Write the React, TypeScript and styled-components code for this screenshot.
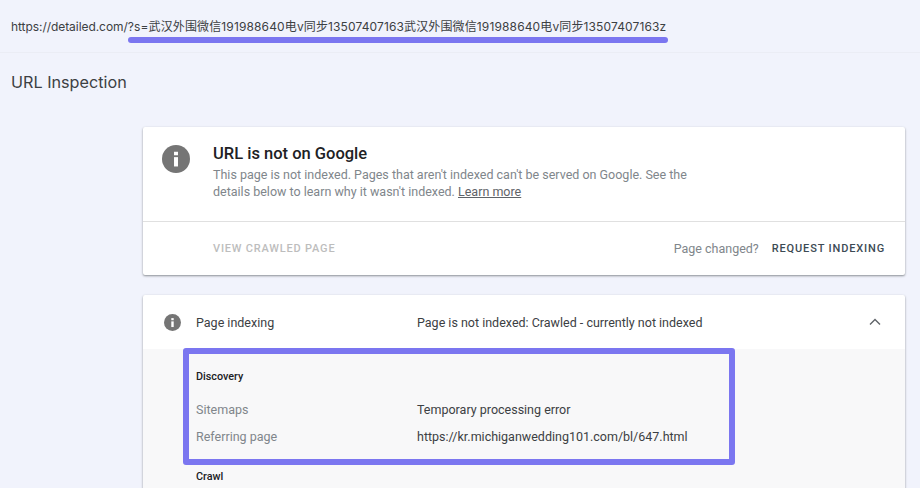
import React from "react";
import styled, { createGlobalStyle } from "styled-components";

const Global = createGlobalStyle`
  html, body { margin: 0; padding: 0; }
  body {
    width: 920px; height: 488px; overflow: hidden;
    background: #f1f3fc;
    font-family: Roboto, "Liberation Sans", "Noto Sans CJK SC", sans-serif;
  }
`;

const Page = styled.div`
  width: 920px; height: 488px; overflow: hidden; display: flex; flex-direction: column;
`;
const UrlBar = styled.div`
  flex: none; height: 53px; box-sizing: border-box; padding: 18px 0 0 11px;
  border-bottom: 1px solid #ebedf5;
  font-family: Inter, "Noto Sans CJK SC", sans-serif; font-size: 12px; letter-spacing: -.06px; line-height: 17px; color: #3c4043; white-space: nowrap;
`;
const Underlined = styled.span`
  position: relative; letter-spacing: .13px;
  &::after {
    content: ""; position: absolute; left: 0; right: -2px; bottom: -9px; height: 6px;
    border-radius: 3px; background: #7b76f0;
  }
`;
const Title = styled.h1`
  flex: none; margin: 18px 0 0 11px; font-family: Inter, sans-serif; font-size: 16.2px; line-height: 22px; font-weight: 400; color: #3c4043;
`;
const Column = styled.main`
  flex: none; margin: 34px 15px 0 143px; display: flex; flex-direction: column; gap: 20px; position: relative;
`;
const Card = styled.section`
  background: #fff; border-radius: 2px;
  box-shadow: 0 1px 2px rgba(60,64,67,.45), 0 1px 3px rgba(60,64,67,.15);
`;
const Summary = styled.div`
  height: 95px; box-sizing: border-box; display: flex; padding: 18px 0 0 19px; gap: 23px;
  border-bottom: 1px solid #e0e0e0;
`;
const SummaryText = styled.div`
  display: flex; flex-direction: column;
`;
const Heading = styled.h2`
  margin: 0 0 4px; font-size: 16.5px; line-height: 18px; font-weight: 500; color: #202124;
`;
const BodyLine = styled.div`
  font-size: 12.5px; line-height: 16.5px; color: #80868b; white-space: nowrap;
`;
const LearnMore = styled.a`
  color: #5f6368; text-decoration: underline;
`;
const Actions = styled.div`
  height: 53px; display: flex; align-items: center; padding: 0 20px 0 70px;
`;
const Disabled = styled.span`
  flex: 1; font-size: 11px; font-weight: 500; letter-spacing: .8px; color: #bdbdbd;
`;
const Changed = styled.span`
  font-size: 12.5px; color: #80868b; margin-right: 13px;
`;
const Request = styled.span`
  font-size: 11px; font-weight: 500; letter-spacing: .85px; color: #3c4a54;
`;
const RowHead = styled.div`
  height: 54px; display: flex; align-items: center; padding: 0 24px 0 21px; font-size: 12.5px; color: #3c4043;
`;
const HeadLabel = styled.span`
  width: 221px; margin-left: 15px;
`;
const HeadValue = styled.span`
  flex: 1;
`;
const Details = styled.div`
  height: 200px; background: #f8f8f9; padding: 0 53px; box-sizing: border-box;
`;
const SectionName = styled.div<{ $top: number }>`
  padding-top: ${p => p.$top}px; font-size: 10.8px; line-height: 14px; font-weight: 500; color: #202124;
`;
const DataRow = styled.div`
  display: flex; height: 27px; align-items: center; font-size: 12.5px;
`;
const DataLabel = styled.span`
  width: 221px; color: #80868b;
`;
const DataValue = styled.span`
  color: #3c4043;
`;
const Rows = styled.div`
  margin-top: 12px;
`;
const Callout = styled.div`
  position: absolute; left: 40px; top: 221px; width: 552px; height: 117px; box-sizing: border-box;
  border: 6px solid #7b76f0; border-radius: 3px;
`;

const InfoIcon = ({ size }: { size: number }) => (
  <svg width={size} height={size} viewBox="0 0 24 24" style={{ flex: "none" }}>
    <circle cx="12" cy="12" r="12" fill="#757575" />
    <rect x="10.3" y="10.4" width="3.4" height="8" fill="#fff" />
    <rect x="10.3" y="5.8" width="3.4" height="3" fill="#fff" />
  </svg>
);
const Chevron = () => (
  <svg width="12" height="8" viewBox="0 0 12 8" style={{ flex: "none" }}>
    <path d="M1 6.5 L6 1.5 L11 6.5" fill="none" stroke="#5f6368" strokeWidth="1.4" />
  </svg>
);

export default function App() {
  return (
    <Page>
      <Global />
      <UrlBar>
        https://detailed.com/
        <Underlined>?s=武汉外围微信191988640电v同步13507407163武汉外围微信191988640电v同步13507407163z</Underlined>
      </UrlBar>
      <Title>URL Inspection</Title>
      <Column>
        <Card>
          <Summary>
            <InfoIcon size={28} />
            <SummaryText>
              <Heading>URL is not on Google</Heading>
              <BodyLine>This page is not indexed. Pages that aren't indexed can't be served on Google. See the</BodyLine>
              <BodyLine>details below to learn why it wasn't indexed. <LearnMore>Learn more</LearnMore></BodyLine>
            </SummaryText>
          </Summary>
          <Actions>
            <Disabled>VIEW CRAWLED PAGE</Disabled>
            <Changed>Page changed?</Changed>
            <Request>REQUEST INDEXING</Request>
          </Actions>
        </Card>
        <Card>
          <RowHead>
            <InfoIcon size={17} />
            <HeadLabel>Page indexing</HeadLabel>
            <HeadValue>Page is not indexed: Crawled - currently not indexed</HeadValue>
            <Chevron />
          </RowHead>
          <Details>
            <SectionName $top={21}>Discovery</SectionName>
            <Rows>
              <DataRow><DataLabel>Sitemaps</DataLabel><DataValue>Temporary processing error</DataValue></DataRow>
              <DataRow><DataLabel>Referring page</DataLabel><DataValue>https://kr.michiganwedding101.com/bl/647.html</DataValue></DataRow>
            </Rows>
            <SectionName $top={20}>Crawl</SectionName>
          </Details>
        </Card>
        <Callout />
      </Column>
    </Page>
  );
}
